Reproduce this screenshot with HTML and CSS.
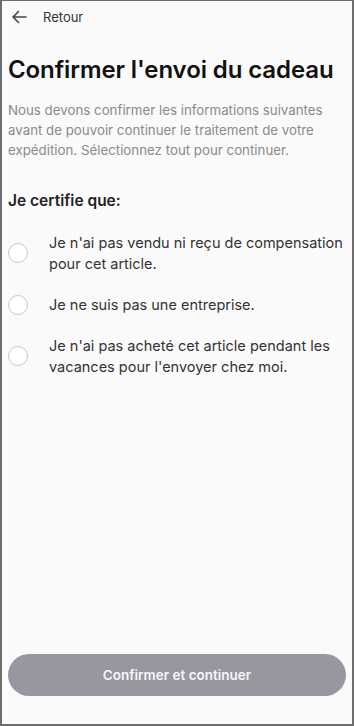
FILE: index.html
```html
<!DOCTYPE html>
<html lang="fr">
<head>
    <meta charset="UTF-8">
    <meta name="viewport" content="width=device-width, initial-scale=1.0">
    <title>Confirmer l'envoi du cadeau</title>
    <link rel="stylesheet" href="styles.css">
</head>
<body>
    <div class="screen">
        <div class="top-bar">
            <svg class="back-icon" width="16" height="14" viewBox="0 0 16 14">
                <path d="M15 7H2M7.5 1.5L2 7l5.5 5.5" fill="none" stroke="#444" stroke-width="1.6" stroke-linecap="round" stroke-linejoin="round"/>
            </svg>
            <span class="back-label">Retour</span>
        </div>

        <h1 class="title">Confirmer l'envoi du cadeau</h1>
        <p class="intro">Nous devons confirmer les informations suivantes avant de pouvoir continuer le traitement de votre expédition. Sélectionnez tout pour continuer.</p>

        <h2 class="section-title">Je certifie que:</h2>
        <ul class="options">
            <li class="option">
                <span class="radio"></span>
                <span class="option-text">Je n'ai pas vendu ni reçu de compensation pour cet article.</span>
            </li>
            <li class="option">
                <span class="radio"></span>
                <span class="option-text">Je ne suis pas une entreprise.</span>
            </li>
            <li class="option">
                <span class="radio"></span>
                <span class="option-text">Je n'ai pas acheté cet article pendant les vacances pour l'envoyer chez moi.</span>
            </li>
        </ul>

        <div class="footer">
            <button class="confirm-button" disabled>Confirmer et continuer</button>
        </div>
    </div>
</body>
</html>
```

FILE: styles.css
```css
body {
    margin: 0;
    font-family: Inter, "Noto Sans", sans-serif;
    background-color: #fbfafb;
}
.screen {
    box-sizing: border-box;
    width: 354px;
    height: 726px;
    border: 2px solid #6e6e6e;
    border-top-width: 1px;
    padding: 0 3px 28px 6px;
    display: flex;
    flex-direction: column;
    background-color: #fbfafb;
}
.top-bar {
    display: flex;
    align-items: center;
    height: 32px;
    padding-left: 3px;
}
.back-icon {
    display: block;
}
.back-label {
    margin-left: 16px;
    font-size: 13px;
    color: #333;
}
.title {
    margin: 22px 0 0 0;
    font-size: 24px;
    font-weight: 600;
    color: #111;
    letter-spacing: -0.1px;
}
.intro {
    margin: 16px 0 0 0;
    font-size: 13.3px;
    line-height: 20px;
    color: #8a8a8a;
}
.section-title {
    margin: 31px 0 0 0;
    font-size: 15.5px;
    font-weight: 600;
    color: #222;
}
.options {
    list-style: none;
    margin: 22px 0 0 0;
    padding: 0;
}
.option {
    display: flex;
    align-items: center;
    margin-bottom: 20px;
}
.radio {
    flex: none;
    width: 18px;
    height: 18px;
    border: 1.5px solid #c8c8c8;
    border-radius: 50%;
    background-color: #fff;
}
.option-text {
    margin-left: 21px;
    font-size: 14.5px;
    line-height: 21px;
    color: #333;
}
.footer {
    margin-top: auto;
    padding-right: 3px;
}
.confirm-button {
    width: 100%;
    height: 42px;
    border: none;
    border-radius: 21px;
    background-color: #9797a0;
    color: #f6f6f8;
    font-family: inherit;
    font-size: 13.5px;
    font-weight: 600;
}
```
